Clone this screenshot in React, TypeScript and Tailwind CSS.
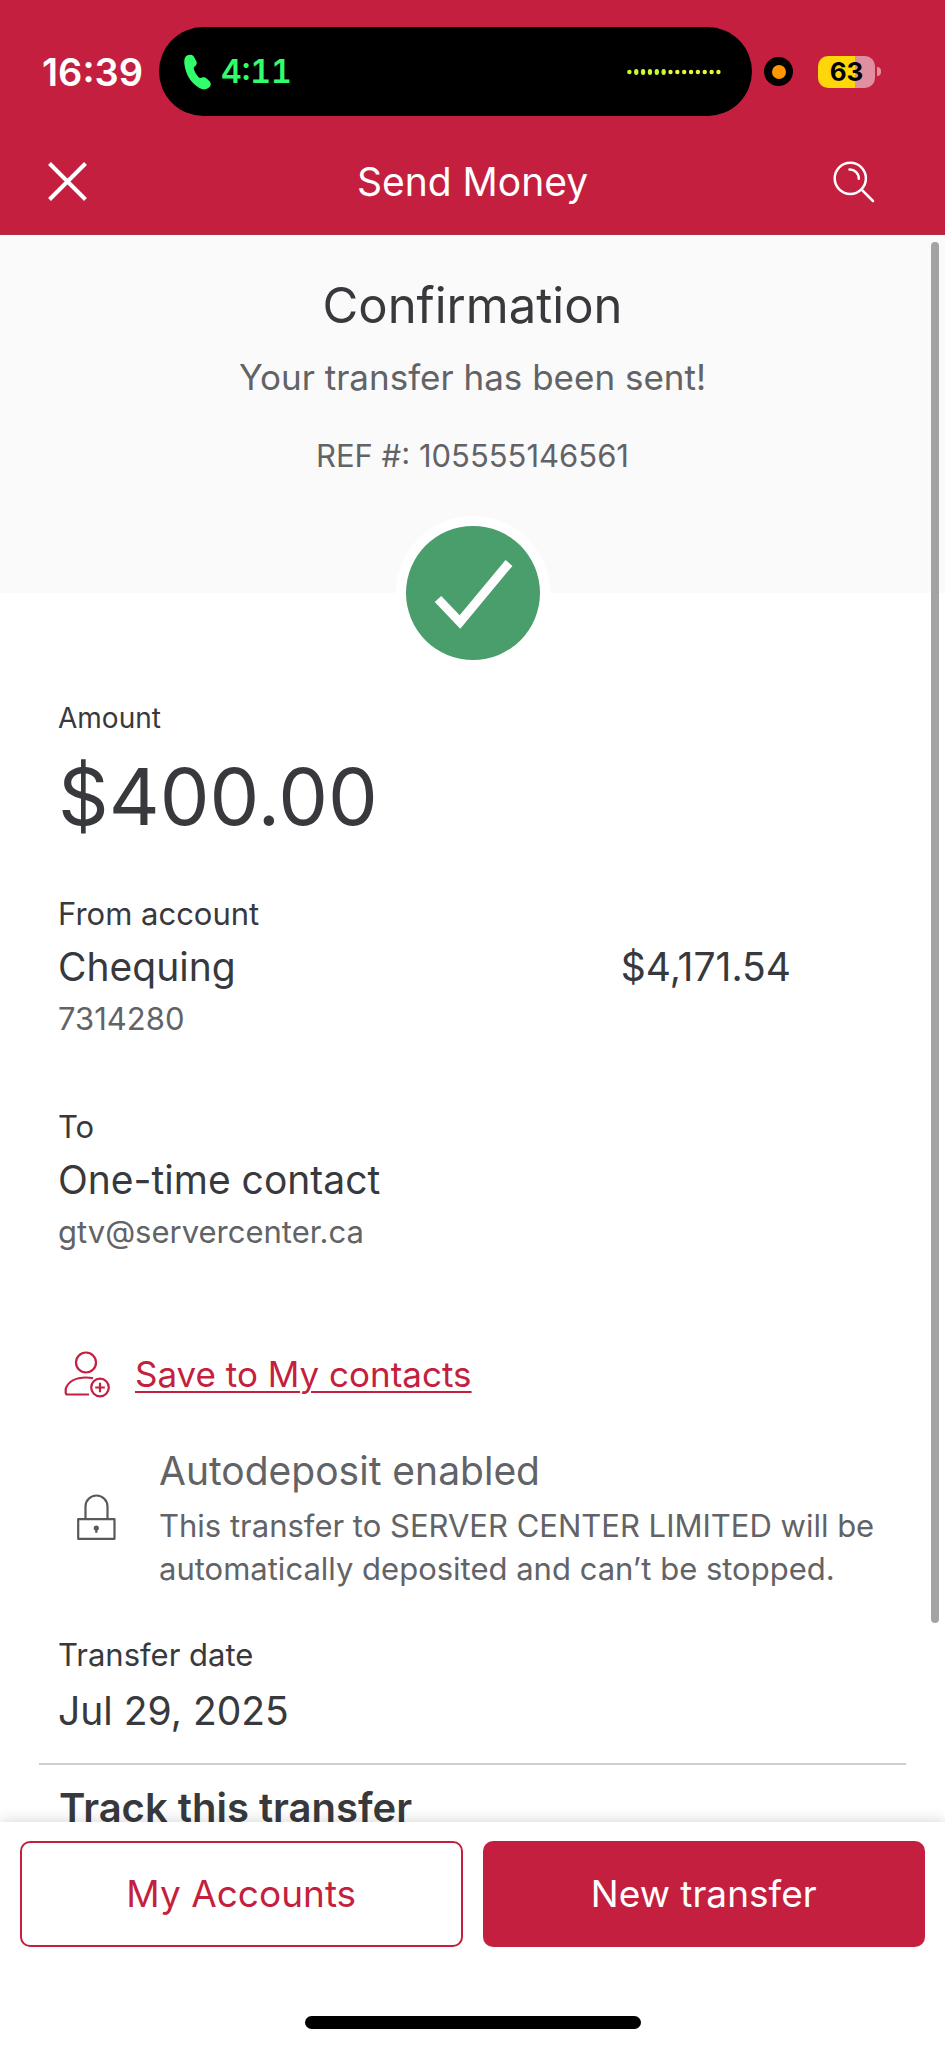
import type { ReactNode } from "react";

const WAVE_DOTS = Array.from({ length: 14 }, (_, i) => i);

const StatusBar = () => {
  return (
    <div className="flex items-center pt-[27px] pl-[42px] font-semibold">
      <span className="w-[117px] text-[38px] leading-[48px]">16:39</span>

      <div className="flex h-[89px] w-[593px] items-center rounded-full bg-black pr-[31px] pl-[25px] text-[#30ff6b]">
        <svg width="28" height="36" viewBox="0 0 28 36" fill="currentColor" aria-hidden="true">
          <path d="M3 1.6C5.4.2 8.4.3 9.9 2.7L12.2 6.9C13.3 9 12.6 11 10.9 12.3C9.6 13.4 9.5 14.3 10.1 15.9C11 18.3 12.3 20.5 14 22.5C15.2 23.9 16.1 24.3 17.6 23.7C19.5 22.9 21.3 23.1 22.7 24.5L25.7 27.6C27.3 29.4 27 31.7 25.2 33.3C22.7 35.6 19.2 36.1 15.8 34.3C7.4 29.8 1.9 21 .5 10.8C-.1 6.8.4 3.2 3 1.6Z" />
        </svg>
        <span className="ml-[9px] text-[32px] leading-[40px] font-semibold tabular-nums">4:11</span>

        <svg className="ml-auto" width="94" height="6" viewBox="0 0 94 6" aria-hidden="true">
          {WAVE_DOTS.map((i) => (
            <ellipse
              key={i}
              cx={2.4 + i * 6.85}
              cy="3"
              rx="2.2"
              ry={i > 0 && i < 6 ? 3 : 2.3}
              fill={i < 6 ? "#c8fb32" : "#eaf83c"}
            />
          ))}
        </svg>
      </div>

      <span className="ml-[12px] flex size-[29px] items-center justify-center rounded-full bg-black">
        <span className="size-[14px] rounded-full bg-[#ff9500]" />
      </span>

      <div className="ml-[25px] flex items-center gap-[2px]">
        <span className="flex h-[32px] w-[57px] items-center justify-center rounded-[10px] bg-linear-to-r from-[#ffd60a] from-65% to-[#e08fa0] to-65% text-[26px] leading-[32px] font-bold text-black">
          63
        </span>
        <span className="h-[9px] w-[4px] rounded-r-full bg-[#e08fa0]" />
      </div>
    </div>
  );
};

const NavBar = () => {
  return (
    <div className="grid h-[118px] grid-cols-[1fr_auto_1fr] items-center pt-[14px]">
      <button type="button" aria-label="Close" className="ml-[48px] w-[42px]">
        <svg width="40" height="40" viewBox="0 0 40 40" fill="none" stroke="currentColor" strokeWidth="4">
          <path d="M1.5 1.5 37.5 37.5M37.5 1.5 1.5 37.5" />
        </svg>
      </button>
      <h1 className="text-[39px] leading-[56px]">Send Money</h1>
      <button type="button" aria-label="Search" className="mr-[70px] w-[42px] justify-self-end">
        <svg
          width="42"
          height="42"
          viewBox="0 0 42 42"
          fill="none"
          stroke="currentColor"
          strokeWidth="2.5"
          strokeLinecap="round"
        >
          <circle cx="17.3" cy="17.3" r="15.6" />
          <path d="M16.5 8.5A9 9 0 0 1 25.8 17.8M28.6 28.6 40 40" />
        </svg>
      </button>
    </div>
  );
};

const Label = ({ children }: { children: ReactNode }) => (
  <h3 className="text-[31px] leading-[44px]">{children}</h3>
);

const Value = ({ children }: { children: ReactNode }) => (
  <p className="text-[39px] leading-[56px]">{children}</p>
);

const Detail = ({ children }: { children: ReactNode }) => (
  <p className="text-[31px] leading-[42px] text-[#626366]">{children}</p>
);

const Confirmation = () => {
  return (
    <section className="flex h-[358px] flex-col items-center bg-[#fafafa] pt-[39px] text-[#626366]">
      <h2 className="text-[49px] leading-[64px] text-[#38393d]">Confirmation</h2>
      <p className="mt-[15px] text-[35px] leading-[48px]">Your transfer has been sent!</p>
      <p className="mt-[33px] text-[31px] leading-[44px]">REF #: 105555146561</p>
      <div className="mt-[38px] size-[154px] shrink-0 rounded-full bg-white p-[10px]">
        <svg viewBox="0 0 134 134" aria-hidden="true">
          <circle cx="67" cy="67" r="67" fill="#4a9e6c" />
          <path d="M32 73 54 96 103 37" fill="none" stroke="#fff" strokeWidth="9" />
        </svg>
      </div>
    </section>
  );
};

const Details = () => {
  return (
    <div className="px-[39px] pt-[105px]">
      <div className="px-[19px]">
        <h3 className="text-[28px] leading-[40px]">Amount</h3>
        <p className="mt-[10px] text-[79px] leading-[96px]">$400.00</p>

        <div className="mt-[48px] flex flex-col gap-[3px]">
          <Label>From account</Label>
          <div className="flex justify-between pr-[96px]">
            <Value>Chequing</Value>
            <Value>$4,171.54</Value>
          </div>
          <Detail>7314280</Detail>
        </div>

        <div className="mt-[65px] flex flex-col gap-[3px]">
          <Label>To</Label>
          <Value>One-time contact</Value>
          <Detail>gtv@servercenter.ca</Detail>
        </div>

        <div className="mt-[97px] flex items-center gap-[24px] pl-[6px] text-[#c41f3e]">
          <svg width="47" height="47" viewBox="0 0 47 47" fill="none" stroke="currentColor" strokeWidth="2.2" aria-hidden="true">
            <circle cx="22" cy="11.5" r="10" />
            <path d="M25 43.5H3.5Q1.7 43.5 1.7 41.5V38C4 30.5 12 26.5 22 26.5Q25.5 26.5 29 27.3" />
            <circle cx="36" cy="36.5" r="8.8" />
            <path d="M36 31.7V41.3M31.2 36.5H40.8" />
          </svg>
          <a href="#contacts" className="text-[35px] leading-[48px] underline decoration-2 underline-offset-4">
            Save to My contacts
          </a>
        </div>

        <div className="mt-[45px] flex items-center gap-[43px] pl-[19px] text-[#626366]">
          <svg
            className="shrink-0"
            width="39"
            height="46"
            viewBox="0 0 39 46"
            fill="none"
            stroke="#58595b"
            strokeWidth="2.2"
            strokeLinejoin="round"
            aria-hidden="true"
          >
            <path d="M8.5 25V12.5A11 11 0 0 1 30.5 12.5V25M1.2 25.2H37.5V44.8H1.2Z" />
            <circle cx="19.3" cy="34" r="2.6" fill="#58595b" stroke="none" />
            <path d="M19.3 34V38.8" />
          </svg>
          <div>
            <h3 className="text-[39px] leading-[56px]">Autodeposit enabled</h3>
            <p className="mt-[5px] text-[31px] leading-[43px]">
              This transfer to SERVER CENTER LIMITED will be automatically deposited and can’t be stopped.
            </p>
          </div>
        </div>

        <div className="mt-[43px] flex flex-col gap-[6px]">
          <Label>Transfer date</Label>
          <Value>Jul 29, 2025</Value>
        </div>
      </div>

      <hr className="mt-[24px] border-t-2 border-[#cccfce]" />
      <h2 className="mt-[15px] px-[20px] text-[40px] leading-[56px] font-semibold">Track this transfer</h2>
    </div>
  );
};

export default function App() {
  return (
    <div className="flex h-screen flex-col bg-white font-['Inter',sans-serif] text-[#38393d]">
      <header className="border-b border-[#ab3049] bg-[#c41f3e] text-white">
        <StatusBar />
        <NavBar />
      </header>

      <div className="relative min-h-0 flex-1">
        <main className="h-full overflow-y-auto [scrollbar-width:none]">
          <Confirmation />
          <Details />
        </main>
        <span className="absolute top-[7px] right-[6px] h-[87%] w-[8px] rounded-full bg-[#a3a3a3]" />
      </div>

      <footer className="relative bg-white px-[20px] pt-[19px] pb-[19px] shadow-[0_0_14px_rgba(0,0,0,0.18)]">
        <div className="grid grid-cols-2 gap-[20px] text-[37px] leading-[48px]">
          <button type="button" className="h-[106px] rounded-[10px] border-2 border-[#c41f3e] text-[#c41f3e]">
            My Accounts
          </button>
          <button type="button" className="h-[106px] rounded-[10px] bg-[#c41f3e] text-white">
            New transfer
          </button>
        </div>
        <div className="mx-auto mt-[69px] h-[13px] w-[336px] rounded-full bg-black" />
      </footer>
    </div>
  );
}
